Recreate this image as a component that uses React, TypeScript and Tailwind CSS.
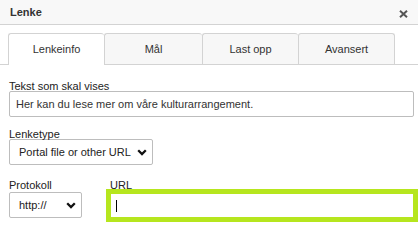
import React from "react";

const tabs = [
  { label: "Lenkeinfo", w: "w-[96px]", active: true },
  { label: "Mål", w: "w-[98px]", active: false },
  { label: "Last opp", w: "w-[96px]", active: false },
  { label: "Avansert", w: "w-[97px] border-r", active: false },
];

function Chevron() {
  return (
    <svg width="10" height="7" viewBox="0 0 10 7" className="shrink-0">
      <path d="M1.2 1.2 L5 5 L8.8 1.2" fill="none" stroke="#111" strokeWidth="2.3" />
    </svg>
  );
}

export default function App() {
  return (
    <div className="w-[418px] h-[222px] overflow-hidden bg-white text-[11px] text-[#222] font-['Liberation_Sans',Arial,sans-serif]">
      <div className="h-[25px] bg-[#f8f8f8] border-b border-[#d3d3d3] flex items-center justify-between pl-[10px] pr-[10px]">
        <span className="font-bold text-[#333]">Lenke</span>
        <svg width="9" height="8" viewBox="0 0 9 8" className="mt-[3px]">
          <path d="M1 0.8 L8 7.2 M8 0.8 L1 7.2" stroke="#555" strokeWidth="2" />
        </svg>
      </div>

      <div className="mt-[8px] pl-[8px] flex items-start border-b border-[#d3d3d3]">
        {tabs.map((t) => (
          <div
            key={t.label}
            className={`${t.w} border-l border-t border-[#d3d3d3] rounded-t-[3px] flex items-center justify-center text-[#333] ${
              t.active ? "h-[32px] -mb-px bg-white relative pb-px" : "h-[31px] bg-[#f7f7f7]"
            }`}
          >
            {t.label}
          </div>
        ))}
      </div>

      <div className="pl-[9px]">
        <div className="mt-[16px] leading-[10px]">Tekst som skal vises</div>
        <div className="w-[405px] h-[26px] border border-[#bdbdbd] rounded-[2px] flex items-center pl-[6px] text-[#333]">
          Her kan du lese mer om våre kulturarrangement.
        </div>

        <div className="mt-[12px] leading-[10px]">Lenketype</div>
        <div className="w-[144px] h-[26px] border border-[#bdbdbd] rounded-[2px] flex items-center justify-between pl-[9px] pr-[5px] whitespace-nowrap text-[#222]">
          <span>Portal file or other URL</span>
          <Chevron />
        </div>

        <div className="mt-[15px] flex">
          <div className="w-[73px] shrink-0">
            <div className="leading-[10px]">Protokoll</div>
            <div className="mt-[2px] h-[26px] border border-[#bdbdbd] rounded-[2px] flex items-center justify-between pl-[9px] pr-[5px] whitespace-nowrap">
              <span>http://</span>
              <Chevron />
            </div>
          </div>
          <div className="ml-[24px] w-[312px] shrink-0">
            <div className="leading-[10px] pl-[4px]">URL</div>
            <div className="-mt-px h-[33px] border-[5px] border-[#b6e61e] bg-white flex items-center pl-[5px]">
              <div className="w-px h-[12px] bg-black" />
            </div>
          </div>
        </div>
      </div>
    </div>
  );
}
